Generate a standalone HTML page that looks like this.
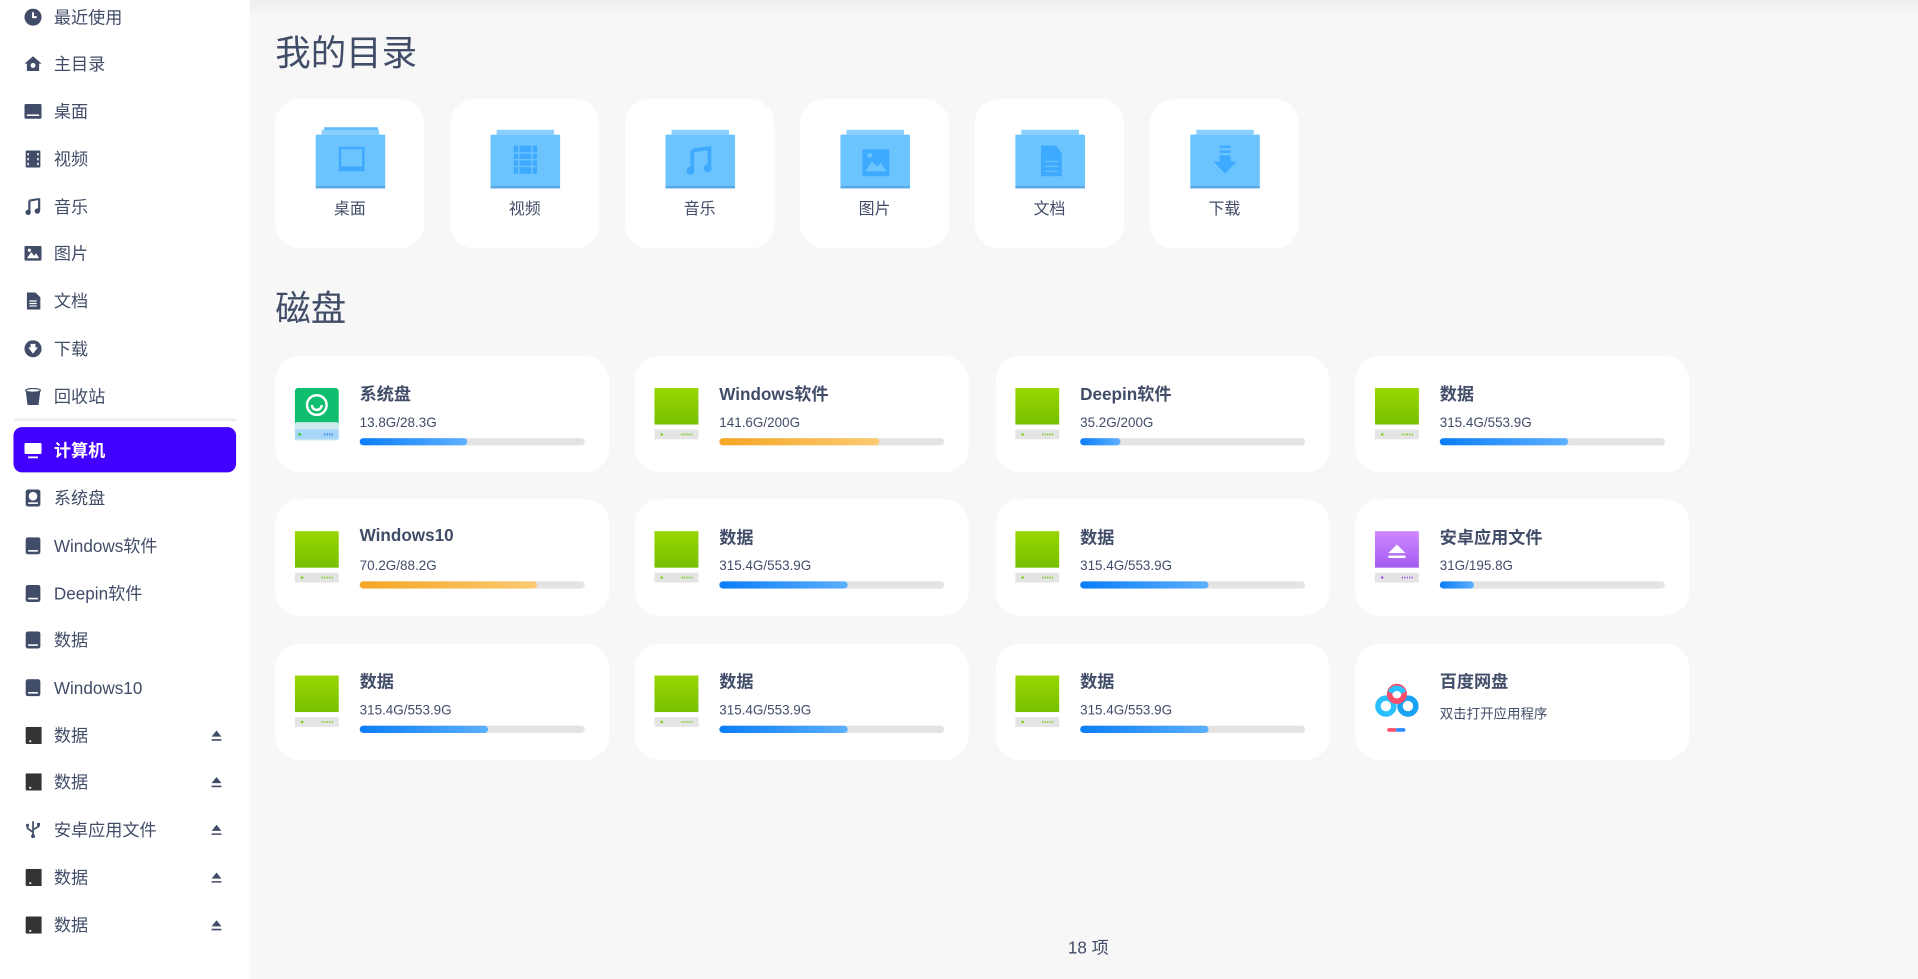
<!DOCTYPE html>
<html><head><meta charset="utf-8"><style>
*{margin:0;padding:0;box-sizing:border-box}
html,body{width:1918px;height:952px;overflow:hidden;background:#f7f7f7}
#r{position:absolute;left:0;top:0;width:1568px;height:778px;transform:scale(1.22321,1.2237);transform-origin:0 0;font-family:"Liberation Sans","Noto Sans CJK SC",sans-serif;color:#414d68}
#sb{position:absolute;left:0;top:0;width:204px;height:800px;background:#fff}
.it{position:absolute;left:20px;height:20px;font-size:14px;line-height:20px;display:flex;align-items:center;width:170px}
.it .ic{width:14px;height:14px;margin-right:10px;flex:none}
.ej{position:absolute;right:8px;top:5px;width:10px;height:10px}
#act{position:absolute;left:11px;top:349px;width:182px;height:37px;background:#4200ff;border-radius:7px}
#top{position:absolute;left:0;top:0;width:1568px;height:14px;background:linear-gradient(#eee,rgba(247,247,247,0))}
h1{position:absolute;left:225px;font-size:29px;font-weight:normal;color:#414d68}
.fc{position:absolute;top:81px;width:122px;height:122px;background:#fff;border-radius:20px}
.fc svg{position:absolute;left:33px;top:22px}
.fc span{position:absolute;left:0;width:122px;top:79px;text-align:center;font-size:13px}
.dc{position:absolute;width:273px;height:95px;background:#fff;border-radius:20px}
.dc .di{position:absolute;left:16px;top:26px}
.dc b{position:absolute;left:69px;top:21px;font-size:14px;font-weight:bold}
.dc i{position:absolute;left:69px;top:49px;font-size:11px;font-style:normal}
.bar{position:absolute;left:69px;top:67px;width:184px;height:6px;border-radius:3px;background:#e4e4e4;overflow:hidden}
.bar div{height:6px;border-radius:3px;background:linear-gradient(90deg,#0a7dfa,#5db0ff)}
.bar div.o{background:linear-gradient(90deg,#f5a623,#fbca72)}
</style></head><body><div id="r">
<div id="top"></div>
<div id="sb">
<div class="it" style="top:4px"><svg class="ic" viewBox="0 0 14 14"><circle cx="7" cy="7" r="7" fill="#414d68"/><path d="M7 3v4h3" stroke="#fff" stroke-width="1.6" fill="none"/></svg>最近使用</div>
<div class="it" style="top:42px"><svg class="ic" viewBox="0 0 14 14"><path d="M7 1L0 7h2v6h10V7h2z" fill="#414d68"/><circle cx="7" cy="8.5" r="2" fill="#fff"/></svg>主目录</div>
<div class="it" style="top:81px"><svg class="ic" viewBox="0 0 14 14"><rect x="0" y="1" width="14" height="12" rx="1" fill="#414d68"/><rect x="2" y="9.5" width="10" height="1.3" fill="#fff"/></svg>桌面</div>
<div class="it" style="top:120px"><svg class="ic" viewBox="0 0 14 14"><rect x="1" y="0" width="12" height="14" rx="1" fill="#414d68"/><path d="M3 2v2M3 6v2M3 10v2M11 2v2M11 6v2M11 10v2" stroke="#fff" stroke-width="1.2"/></svg>视频</div>
<div class="it" style="top:159px"><svg class="ic" viewBox="0 0 14 14"><path d="M4 2l8-1.5V10" stroke="#414d68" stroke-width="1.8" fill="none"/><path d="M4 2v9" stroke="#414d68" stroke-width="1.8"/><circle cx="3" cy="11.5" r="2.2" fill="#414d68"/><circle cx="10.5" cy="10.5" r="2.2" fill="#414d68"/></svg>音乐</div>
<div class="it" style="top:197px"><svg class="ic" viewBox="0 0 14 14"><rect x="0" y="1" width="14" height="12" rx="1" fill="#414d68"/><path d="M2 11l3.5-5 2.5 3 1.5-2 2.5 4z" fill="#fff"/><circle cx="4" cy="4.5" r="1.3" fill="#fff"/></svg>图片</div>
<div class="it" style="top:236px"><svg class="ic" viewBox="0 0 14 14"><path d="M2 0h7l4 4v10H2z" fill="#414d68"/><path d="M4 7h6M4 9h6M4 11h6" stroke="#fff" stroke-width="1"/></svg>文档</div>
<div class="it" style="top:275px"><svg class="ic" viewBox="0 0 14 14"><circle cx="7" cy="7" r="7" fill="#414d68"/><path d="M5 3h4v3h2l-4 5-4-5h2z" fill="#fff"/></svg>下载</div>
<div class="it" style="top:314px"><svg class="ic" viewBox="0 0 14 14"><path d="M1 2h12l-1.5 12h-9z" fill="#414d68"/><ellipse cx="7" cy="2" rx="6" ry="1.5" fill="#fff" stroke="#414d68"/></svg>回收站</div>
<div style="position:absolute;left:11px;top:342px;width:182px;height:2px;background:#eee"></div>
<div id="act"></div>
<div class="it" style="top:358px;color:#fff;font-weight:bold"><svg class="ic" viewBox="0 0 14 14"><rect x="0" y="1" width="14" height="9" rx="1" fill="#fff"/><rect x="3" y="12" width="8" height="1.5" fill="#fff"/></svg>计算机</div>
<div class="it" style="top:397px"><svg class="ic" viewBox="0 0 14 14"><rect x="1" y="0" width="12" height="14" rx="2" fill="#414d68"/><circle cx="7" cy="5.5" r="3.5" fill="#fff"/><rect x="3" y="10.5" width="8" height="1.3" fill="#fff"/></svg>系统盘</div>
<div class="it" style="top:436px"><svg class="ic" viewBox="0 0 14 14"><rect x="1" y="0" width="12" height="14" rx="2" fill="#414d68"/><rect x="3" y="10.5" width="8" height="1.3" fill="#fff"/></svg>Windows软件</div>
<div class="it" style="top:475px"><svg class="ic" viewBox="0 0 14 14"><rect x="1" y="0" width="12" height="14" rx="2" fill="#414d68"/><rect x="3" y="10.5" width="8" height="1.3" fill="#fff"/></svg>Deepin软件</div>
<div class="it" style="top:513px"><svg class="ic" viewBox="0 0 14 14"><rect x="1" y="0" width="12" height="14" rx="2" fill="#414d68"/><rect x="3" y="10.5" width="8" height="1.3" fill="#fff"/></svg>数据</div>
<div class="it" style="top:552px"><svg class="ic" viewBox="0 0 14 14"><rect x="1" y="0" width="12" height="14" rx="2" fill="#414d68"/><rect x="3" y="10.5" width="8" height="1.3" fill="#fff"/></svg>Windows10</div>
<div class="it" style="top:591px"><svg class="ic" viewBox="0 0 14 14"><rect x="1" y="0" width="14" height="14" rx="1" fill="#333"/><rect x="4" y="11" width="1.5" height="1.5" fill="#fff"/></svg>数据<svg class="ej" viewBox="0 0 10 10"><path d="M5 1l4 5H1z M1 8h8v1.3H1z" fill="#414d68"/></svg></div>
<div class="it" style="top:629px"><svg class="ic" viewBox="0 0 14 14"><rect x="1" y="0" width="14" height="14" rx="1" fill="#333"/><rect x="4" y="11" width="1.5" height="1.5" fill="#fff"/></svg>数据<svg class="ej" viewBox="0 0 10 10"><path d="M5 1l4 5H1z M1 8h8v1.3H1z" fill="#414d68"/></svg></div>
<div class="it" style="top:668px"><svg class="ic" viewBox="0 0 14 14"><path d="M7 0v13M7 9L2.5 6V4M7 7l4.5-2.5V3" stroke="#414d68" stroke-width="1.4" fill="none"/><circle cx="7" cy="12.3" r="1.6" fill="#414d68"/><circle cx="2.5" cy="3.5" r="1.3" fill="#414d68"/><rect x="10.3" y="1.5" width="2.4" height="2.4" fill="#414d68"/></svg>安卓应用文件<svg class="ej" viewBox="0 0 10 10"><path d="M5 1l4 5H1z M1 8h8v1.3H1z" fill="#414d68"/></svg></div>
<div class="it" style="top:707px"><svg class="ic" viewBox="0 0 14 14"><rect x="1" y="0" width="14" height="14" rx="1" fill="#333"/><rect x="4" y="11" width="1.5" height="1.5" fill="#fff"/></svg>数据<svg class="ej" viewBox="0 0 10 10"><path d="M5 1l4 5H1z M1 8h8v1.3H1z" fill="#414d68"/></svg></div>
<div class="it" style="top:746px"><svg class="ic" viewBox="0 0 14 14"><rect x="1" y="0" width="14" height="14" rx="1" fill="#333"/><rect x="4" y="11" width="1.5" height="1.5" fill="#fff"/></svg>数据<svg class="ej" viewBox="0 0 10 10"><path d="M5 1l4 5H1z M1 8h8v1.3H1z" fill="#414d68"/></svg></div>
</div>

<h1 style="top:20px">我的目录</h1>
<h1 style="top:229px">磁盘</h1>

<div class="fc" style="left:225px"><svg width="57" height="52" viewBox="0 0 57 52"><path d="M7 1h44v4H7z" fill="#5fb9fb"/><path d="M5 3h47v4H5z" fill="#8ad0ff"/><rect x="0" y="7" width="57" height="43" rx="1" fill="#6cc4ff"/><rect x="0" y="49" width="57" height="2" fill="#5aa8e0"/><rect x="19" y="17" width="21" height="20" fill="#3da9ff"/><rect x="21" y="19" width="17" height="14" fill="#6cc4ff"/></svg><span>桌面</span></div>
<div class="fc" style="left:368px"><svg width="57" height="52" viewBox="0 0 57 52"><path d="M5 3h47v4H5z" fill="#8ad0ff"/><rect x="0" y="7" width="57" height="43" rx="1" fill="#6cc4ff"/><rect x="0" y="49" width="57" height="2" fill="#5aa8e0"/><rect x="19" y="16" width="19" height="23" fill="#3da9ff"/><path d="M23 16v23M34 16v23M19 22h19M19 27.5h19M19 33h19" stroke="#6cc4ff" stroke-width="1.2"/></svg><span>视频</span></div>
<div class="fc" style="left:511px"><svg width="57" height="52" viewBox="0 0 57 52"><path d="M5 3h47v4H5z" fill="#8ad0ff"/><rect x="0" y="7" width="57" height="43" rx="1" fill="#6cc4ff"/><rect x="0" y="49" width="57" height="2" fill="#5aa8e0"/><path d="M22 20l14-2v16" stroke="#3da9ff" stroke-width="3" fill="none"/><path d="M22 20v16" stroke="#3da9ff" stroke-width="3"/><circle cx="20.5" cy="36.5" r="3.3" fill="#3da9ff"/><circle cx="34.5" cy="34.5" r="3.3" fill="#3da9ff"/></svg><span>音乐</span></div>
<div class="fc" style="left:654px"><svg width="57" height="52" viewBox="0 0 57 52"><path d="M5 3h47v4H5z" fill="#8ad0ff"/><rect x="0" y="7" width="57" height="43" rx="1" fill="#6cc4ff"/><rect x="0" y="49" width="57" height="2" fill="#5aa8e0"/><rect x="18" y="19" width="22" height="22" fill="#3da9ff"/><path d="M20 37l6-8 4 4 3-3 5 7z" fill="#6cc4ff"/><circle cx="24" cy="24" r="2" fill="#6cc4ff"/></svg><span>图片</span></div>
<div class="fc" style="left:797px"><svg width="57" height="52" viewBox="0 0 57 52"><path d="M5 3h47v4H5z" fill="#8ad0ff"/><rect x="0" y="7" width="57" height="43" rx="1" fill="#6cc4ff"/><rect x="0" y="49" width="57" height="2" fill="#5aa8e0"/><path d="M21 16h12l5 6v19H21z" fill="#3da9ff"/><path d="M24 29h11M24 33h11M24 37h11" stroke="#6cc4ff" stroke-width="1"/></svg><span>文档</span></div>
<div class="fc" style="left:940px"><svg width="57" height="52" viewBox="0 0 57 52"><path d="M5 3h47v4H5z" fill="#8ad0ff"/><rect x="0" y="7" width="57" height="43" rx="1" fill="#6cc4ff"/><rect x="0" y="49" width="57" height="2" fill="#5aa8e0"/><path d="M24 16h9v2h-9zM24 20h9v2h-9zM24 24h9v5h5l-9.5 10-9.5-10h5z" fill="#3da9ff"/></svg><span>下载</span></div>

<svg width="0" height="0" style="position:absolute"><defs><linearGradient id="g" x1="0" y1="0" x2="0" y2="1"><stop offset="0" stop-color="#99d600"/><stop offset="1" stop-color="#76c000"/></linearGradient><linearGradient id="p" x1="0" y1="0" x2="0" y2="1"><stop offset="0" stop-color="#cf88ff"/><stop offset="1" stop-color="#a25cf0"/></linearGradient></defs></svg>

<div class="dc" style="left:225px;top:291px"><svg class="di" width="36" height="43" viewBox="0 0 36 43"><rect x="0" y="0" width="36" height="34" rx="3" fill="#0fbf6f"/><rect x="0" y="28" width="36" height="15" rx="2" fill="#cce9f0"/><rect x="0" y="34" width="36" height="8" fill="#a8d6f8"/><circle cx="4" cy="38" r="1.2" fill="#3c3"/><path d="M24 38h8" stroke="#3a8ee8" stroke-width="2" stroke-dasharray="1 1"/><circle cx="18" cy="14" r="8" fill="none" stroke="#fff" stroke-width="2"/><path d="M14 14a4 4 0 0 0 8 0" stroke="#fff" stroke-width="2" fill="none"/></svg><b>系统盘</b><i>13.8G/28.3G</i><div class="bar"><div style="width:48%"></div></div></div>

<div class="dc" style="left:519px;top:291px"><svg class="di" width="36" height="43" viewBox="0 0 36 43"><rect x="0" y="0" width="36" height="30" fill="url(#g)"/><rect x="0" y="30" width="36" height="4" fill="#fff"/><rect x="0" y="34" width="36" height="8" fill="#e4e4e4"/><circle cx="6" cy="38" r="1" fill="#6c0"/><path d="M22 38h9" stroke="#6c0" stroke-width="1.3" stroke-dasharray="1 1"/></svg><b>Windows软件</b><i>141.6G/200G</i><div class="bar"><div class="o" style="width:71%"></div></div></div>

<div class="dc" style="left:814px;top:291px"><svg class="di" width="36" height="43" viewBox="0 0 36 43"><rect x="0" y="0" width="36" height="30" fill="url(#g)"/><rect x="0" y="30" width="36" height="4" fill="#fff"/><rect x="0" y="34" width="36" height="8" fill="#e4e4e4"/><circle cx="6" cy="38" r="1" fill="#6c0"/><path d="M22 38h9" stroke="#6c0" stroke-width="1.3" stroke-dasharray="1 1"/></svg><b>Deepin软件</b><i>35.2G/200G</i><div class="bar"><div style="width:18%"></div></div></div>

<div class="dc" style="left:1108px;top:291px"><svg class="di" width="36" height="43" viewBox="0 0 36 43"><rect x="0" y="0" width="36" height="30" fill="url(#g)"/><rect x="0" y="30" width="36" height="4" fill="#fff"/><rect x="0" y="34" width="36" height="8" fill="#e4e4e4"/><circle cx="6" cy="38" r="1" fill="#6c0"/><path d="M22 38h9" stroke="#6c0" stroke-width="1.3" stroke-dasharray="1 1"/></svg><b>数据</b><i>315.4G/553.9G</i><div class="bar"><div style="width:57%"></div></div></div>

<div class="dc" style="left:225px;top:408px"><svg class="di" width="36" height="43" viewBox="0 0 36 43"><rect x="0" y="0" width="36" height="30" fill="url(#g)"/><rect x="0" y="30" width="36" height="4" fill="#fff"/><rect x="0" y="34" width="36" height="8" fill="#e4e4e4"/><circle cx="6" cy="38" r="1" fill="#6c0"/><path d="M22 38h9" stroke="#6c0" stroke-width="1.3" stroke-dasharray="1 1"/></svg><b>Windows10</b><i>70.2G/88.2G</i><div class="bar"><div class="o" style="width:79%"></div></div></div>

<div class="dc" style="left:519px;top:408px"><svg class="di" width="36" height="43" viewBox="0 0 36 43"><rect x="0" y="0" width="36" height="30" fill="url(#g)"/><rect x="0" y="30" width="36" height="4" fill="#fff"/><rect x="0" y="34" width="36" height="8" fill="#e4e4e4"/><circle cx="6" cy="38" r="1" fill="#6c0"/><path d="M22 38h9" stroke="#6c0" stroke-width="1.3" stroke-dasharray="1 1"/></svg><b>数据</b><i>315.4G/553.9G</i><div class="bar"><div style="width:57%"></div></div></div>

<div class="dc" style="left:814px;top:408px"><svg class="di" width="36" height="43" viewBox="0 0 36 43"><rect x="0" y="0" width="36" height="30" fill="url(#g)"/><rect x="0" y="30" width="36" height="4" fill="#fff"/><rect x="0" y="34" width="36" height="8" fill="#e4e4e4"/><circle cx="6" cy="38" r="1" fill="#6c0"/><path d="M22 38h9" stroke="#6c0" stroke-width="1.3" stroke-dasharray="1 1"/></svg><b>数据</b><i>315.4G/553.9G</i><div class="bar"><div style="width:57%"></div></div></div>

<div class="dc" style="left:1108px;top:408px"><svg class="di" width="36" height="43" viewBox="0 0 36 43"><rect x="0" y="0" width="36" height="30" fill="url(#p)"/><rect x="0" y="30" width="36" height="4" fill="#fff"/><rect x="0" y="34" width="36" height="8" fill="#e4e4e4"/><circle cx="6" cy="38" r="1" fill="#a040ff"/><path d="M22 38h9" stroke="#a040ff" stroke-width="1.3" stroke-dasharray="1 1"/><path d="M18 11l7 7H11z" fill="#fff"/><rect x="11" y="20" width="14" height="2" fill="#fff"/></svg><b>安卓应用文件</b><i>31G/195.8G</i><div class="bar"><div style="width:15%"></div></div></div>

<div class="dc" style="left:225px;top:526px"><svg class="di" width="36" height="43" viewBox="0 0 36 43"><rect x="0" y="0" width="36" height="30" fill="url(#g)"/><rect x="0" y="30" width="36" height="4" fill="#fff"/><rect x="0" y="34" width="36" height="8" fill="#e4e4e4"/><circle cx="6" cy="38" r="1" fill="#6c0"/><path d="M22 38h9" stroke="#6c0" stroke-width="1.3" stroke-dasharray="1 1"/></svg><b>数据</b><i>315.4G/553.9G</i><div class="bar"><div style="width:57%"></div></div></div>

<div class="dc" style="left:519px;top:526px"><svg class="di" width="36" height="43" viewBox="0 0 36 43"><rect x="0" y="0" width="36" height="30" fill="url(#g)"/><rect x="0" y="30" width="36" height="4" fill="#fff"/><rect x="0" y="34" width="36" height="8" fill="#e4e4e4"/><circle cx="6" cy="38" r="1" fill="#6c0"/><path d="M22 38h9" stroke="#6c0" stroke-width="1.3" stroke-dasharray="1 1"/></svg><b>数据</b><i>315.4G/553.9G</i><div class="bar"><div style="width:57%"></div></div></div>

<div class="dc" style="left:814px;top:526px"><svg class="di" width="36" height="43" viewBox="0 0 36 43"><rect x="0" y="0" width="36" height="30" fill="url(#g)"/><rect x="0" y="30" width="36" height="4" fill="#fff"/><rect x="0" y="34" width="36" height="8" fill="#e4e4e4"/><circle cx="6" cy="38" r="1" fill="#6c0"/><path d="M22 38h9" stroke="#6c0" stroke-width="1.3" stroke-dasharray="1 1"/></svg><b>数据</b><i>315.4G/553.9G</i><div class="bar"><div style="width:57%"></div></div></div>

<div class="dc" style="left:1108px;top:526px"><svg class="di" style="left:16px;top:30px" width="36" height="44" viewBox="0 0 36 44"><circle cx="9" cy="21" r="6.5" fill="none" stroke="#2bc0ff" stroke-width="4.5"/><circle cx="27" cy="21" r="6.5" fill="none" stroke="#1aa3f5" stroke-width="4.5"/><circle cx="18" cy="11" r="6" fill="none" stroke="#ff4d6a" stroke-width="4.5"/><path d="M12.5 10a6 6 0 0 1 11 0" fill="none" stroke="#2bc0ff" stroke-width="4.5"/><rect x="10" y="39" width="8" height="3" rx="1.5" fill="#ff4d6a"/><rect x="17" y="39" width="8" height="3" rx="1.5" fill="#2a8cff"/></svg><b>百度网盘</b><i>双击打开应用程序</i></div>

<div style="position:absolute;left:873px;top:764px;font-size:14px">18 项</div>
</div></body></html>
